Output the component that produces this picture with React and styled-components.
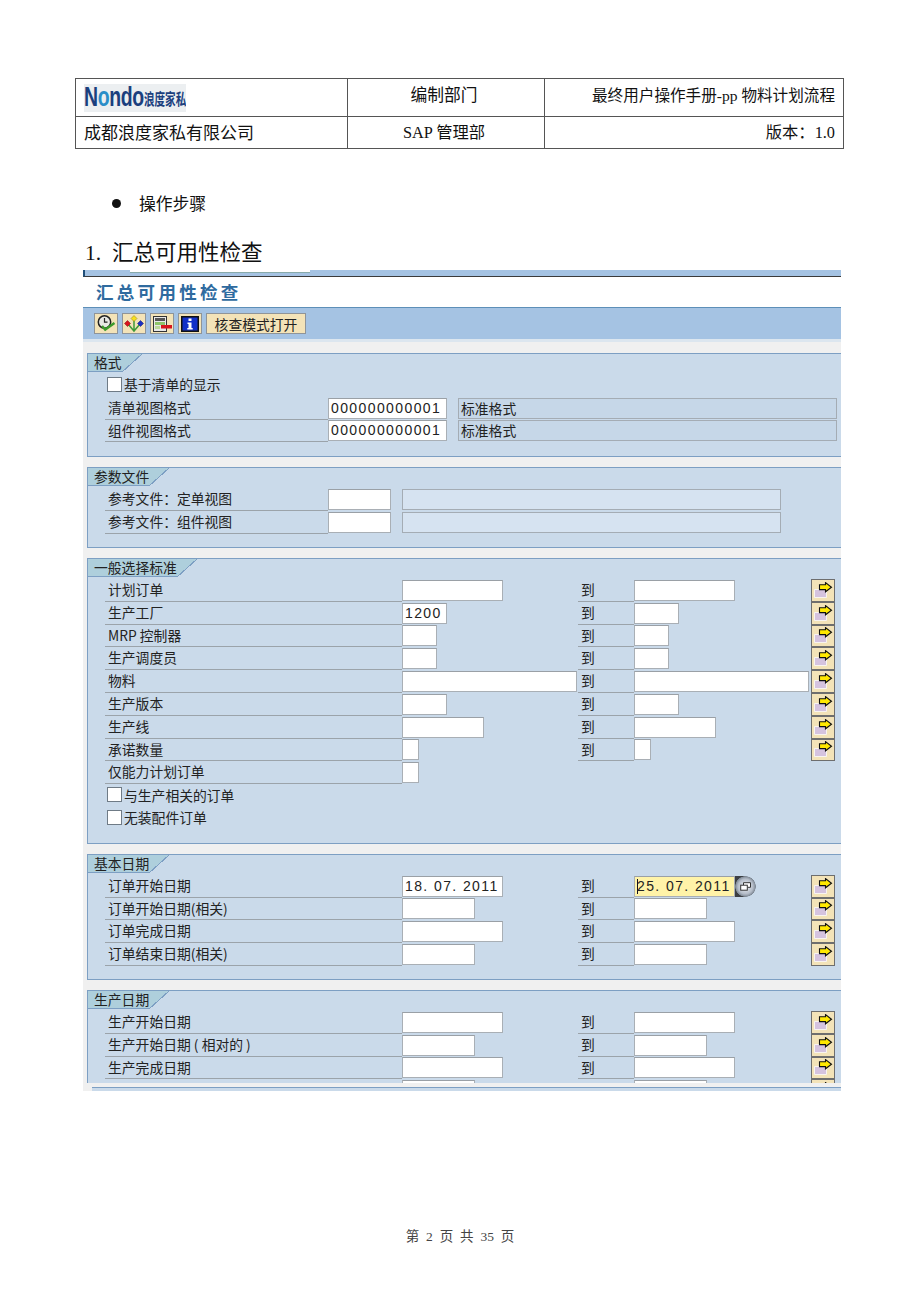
import React from 'react'
import styled, { createGlobalStyle } from 'styled-components'

const CJK = '"Noto Sans CJK SC", sans-serif'
const DOC = '"Liberation Serif", "Noto Sans CJK SC", serif'

const GlobalStyle = createGlobalStyle`
  html, body { margin: 0; padding: 0; background: #fff; }
  body { font-family: ${CJK}; color: #111; }
`

const ClockIcon = () => (
  <svg width="19" height="17" viewBox="0 0 19 17">
    <circle cx="7.5" cy="7" r="6.2" fill="#e8e8e4" stroke="#222" strokeWidth="1.5" />
    <path d="M7.5 3v4.2h3" fill="none" stroke="#222" strokeWidth="1.2" />
    <path d="M5 11l3.2 3.6L17.5 8" fill="none" stroke="#3d9a2c" strokeWidth="2.4" />
  </svg>
)

const TreeIcon = () => (
  <svg width="20" height="18" viewBox="0 0 20 18">
    <path d="M10 5v11M4 9l6 7 6-7" fill="none" stroke="#3f9a3a" strokeWidth="1.5" />
    <path d="M10 .5l3 3-3 3-3-3z" fill="#f5df1e" stroke="#8a7a10" strokeWidth=".5" />
    <path d="M3.5 5.5l3 3-3 3-3-3z" fill="#d8141c" stroke="#7a1010" strokeWidth=".5" />
    <path d="M16.5 5.5l3 3-3 3-3-3z" fill="#1a2fc0" stroke="#101a70" strokeWidth=".5" />
  </svg>
)

const FormIcon = () => (
  <svg width="19" height="16" viewBox="0 0 19 16">
    <rect x=".5" y=".5" width="13" height="15" fill="#e8e8e8" stroke="#333" />
    <rect x="2" y="2" width="10" height="3" fill="#555" />
    <rect x="2" y="6" width="10" height="3" fill="#8fc46a" />
    <rect x="2" y="10" width="5" height="3" fill="#bcd89a" />
    <rect x="8" y="9" width="11" height="3.5" fill="#d8141c" />
  </svg>
)

const InfoIcon = () => (
  <svg width="18" height="16" viewBox="0 0 18 16">
    <rect x=".75" y=".75" width="16.5" height="14.5" fill="#1230c8" stroke="#111" strokeWidth="1.5" />
    <rect x="7.5" y="2.5" width="3" height="2.5" fill="#fff" />
    <path d="M6.5 6.5h4v5.5h1.2v1.6H6.3V12h1.2V8H6.5z" fill="#fff" />
  </svg>
)

const ArrowIcon = () => (
  <svg width="20" height="17" viewBox="0 0 20 17">
    <path d="M1.5 7.5h12v8h-12z" fill="#d5c3df" stroke="#f8f4f0" />
    <path d="M6.5 2.8h6V.6l6 4.6-6 4.6V7.6h-6z" fill="#ffe800" stroke="#111" strokeWidth="1.1" />
  </svg>
)

const WindowsIcon = () => (
  <svg width="11" height="9" viewBox="0 0 11 9">
    <path d="M3.5 3V.7h7v4.6H7.5" fill="#fff" stroke="#333" />
    <rect x=".7" y="3.2" width="6.6" height="5" fill="#fff" stroke="#333" />
  </svg>
)

const Page = styled.div`
  width: 920px;
  height: 1301px;
  overflow: hidden;
  box-sizing: border-box;
  padding-top: 78px;
  position: relative;
`

const HeadTable = styled.div`
  width: 769px;
  margin-left: 75px;
  box-sizing: border-box;
  display: grid;
  grid-template-columns: 271px 197px 1fr;
  grid-template-rows: 37px 32px;
  border: 1px solid #555;
  font-family: ${DOC};
`

const HeadCell = styled.div`
  display: flex;
  align-items: center;
  justify-content: ${p => p.$align || 'center'};
  box-sizing: border-box;
  padding: 0 8px ${p => p.$lift || 0}px ${p => p.$left ?? 8}px;
  border-left: ${p => (p.$first ? 'none' : '1px solid #555')};
  border-top: ${p => (p.$lower ? '1px solid #555' : 'none')};
  font-size: ${p => p.$size || 16.3}px;
  white-space: nowrap;
`

const Logo = styled.div`
  width: 102px;
  height: 28px;
  background: #eceff1;
  display: flex;
  align-items: center;
  overflow: hidden;
  font-family: "Liberation Sans", ${CJK};
  color: #1b3f7e;
  font-weight: 700;
`

const LogoWord = styled.span`
  font-size: 27px;
  letter-spacing: -0.5px;
  transform: scaleX(0.72);
  transform-origin: left center;
  width: 60px;
  flex: none;
`

const LogoDot = styled.span`
  color: #2a8ec8;
`

const LogoCn = styled.span`
  font-size: 16px;
  transform: scaleX(0.66);
  transform-origin: left center;
  flex: none;
  white-space: nowrap;
`

const BulletRow = styled.div`
  margin: 43px 0 0 112px;
  height: 22px;
  display: flex;
  align-items: center;
  font-size: 16.8px;
`

const Bullet = styled.span`
  width: 9px;
  height: 9px;
  border-radius: 50%;
  background: #111;
  margin-right: 18px;
`

const Heading = styled.h1`
  margin: 24px 0 0 85px;
  height: 30px;
  line-height: 30px;
  font-size: 21.5px;
  font-weight: 400;
  font-family: "Liberation Serif", ${CJK};
  display: flex;
`

const HeadNum = styled.span`
  width: 27px;
`

const Shot = styled.div`
  margin: 2px 0 0 83px;
  width: 758px;
  height: 821px;
  display: flex;
  flex-direction: column;
  overflow: hidden;
  background: #f0f0f0;
`

const TopStrip = styled.div`
  height: 7px;
  flex: none;
  background: #a5c3e3;
  border-left: 2px solid #1f4f7a;
  border-bottom: 1px solid #3b3b3b;
  box-sizing: border-box;
  padding-left: 45px;
`

const TopTab = styled.div`
  width: 180px;
  height: 2px;
  background: #fff;
  border-bottom: 1px solid #8aa;
`

const TitleBar = styled.div`
  height: 30px;
  flex: none;
  background: #fff;
  border-bottom: 1px solid #5d8fb8;
  padding-left: 13px;
  font-size: 17.5px;
  font-weight: 700;
  letter-spacing: 3.3px;
  color: #2f6b9f;
  line-height: 30px;
`

const Toolbar = styled.div`
  height: 34px;
  flex: none;
  box-sizing: border-box;
  background: #a5c3e3;
  border-bottom: 3px solid #dce6ef;
  display: flex;
  align-items: center;
  gap: 4px;
  padding: 0 0 0 11px;
`

const ToolButton = styled.button`
  height: 21px;
  width: ${p => p.$w || 24}px;
  padding: 0;
  box-sizing: border-box;
  display: flex;
  align-items: center;
  justify-content: center;
  background: #f3e3b8;
  border: 1px solid #7f7f78;
  outline: 1px solid #8f9498;
  outline-offset: -1px;
  font-family: ${CJK};
  font-size: 13.8px;
  color: #222;
`

const Groups = styled.div`
  flex: 1;
  min-height: 0;
  overflow: hidden;
  padding: 11px 0 0 4px;
  display: flex;
  flex-direction: column;
  gap: 10px;
`

const Group = styled.section`
  flex: none;
  background: #cadaea;
  border: 1px solid #7d9fc3;
  border-right: none;
  padding-bottom: ${p => p.$pb || 13}px;
`

const TabWrap = styled.div`
  display: flex;
  height: 18px;
  margin-bottom: 2px;
`

const TabText = styled.div`
  background: #aecfdc;
  border-bottom: 1px solid #7d9fc3;
  padding: 0 0 0 6px;
  font-size: 13.8px;
  line-height: 16px;
  color: #222;
  box-sizing: border-box;
`

const TabCorner = styled.div`
  width: 20px;
  background: linear-gradient(to bottom right, #aecfdc 0 calc(50% - 0.5px), #7d9fc3 calc(50% - 0.5px) calc(50% + 0.5px), transparent calc(50% + 0.5px));
`

const Rows = styled.div`
  padding-left: 17px;
`

const CriteriaRow = styled.div`
  height: 22.8px;
  display: grid;
  grid-template-columns: 297px 176px 56px 177px 24px;
  align-items: center;
`

const FormatRow = styled.div`
  height: 22.8px;
  display: grid;
  grid-template-columns: 223px ${p => p.$slot}px ${p => p.$desc}px;
  align-items: center;
`

const Label = styled.div`
  height: 100%;
  box-sizing: border-box;
  border-bottom: 1px solid #9ba3aa;
  padding-left: 3px;
  font-size: 13.8px;
  line-height: 21px;
  color: #222;
  white-space: nowrap;
`

const CheckRow = styled.label`
  height: 22.8px;
  box-sizing: border-box;
  padding: 0 0 2px 2px;
  display: flex;
  align-items: center;
  font-size: 13.8px;
  color: #222;
`

const Box = styled.span`
  width: 13px;
  height: 13px;
  background: #fff;
  border: 1px solid #6f7b86;
  margin-right: 2px;
`

const Field = styled.div`
  width: ${p => p.$w}px;
  height: 21px;
  box-sizing: border-box;
  background: ${p => (p.$focus ? '#fff3a8' : '#fff')};
  border: 1px solid #a9afb5;
  border-top-color: #9aa0a6;
  padding-left: 2px;
  font-family: "Liberation Sans", sans-serif;
  font-size: 14px;
  letter-spacing: 1.4px;
  line-height: 19px;
  color: #222;
  overflow: hidden;
  white-space: nowrap;
`

const Caret = styled.span`
  display: inline-block;
  width: 1px;
  height: 15px;
  margin-right: -1px;
  vertical-align: -3px;
  background: #112;
`

const Desc = styled.div`
  height: 21px;
  box-sizing: border-box;
  background: ${p => (p.$light ? '#d6e3f1' : '#c6d7e8')};
  border: 1px solid #a4acb4;
  padding-left: 2px;
  font-size: 13.8px;
  line-height: 19px;
  color: #222;
`

const ToSlot = styled.div`
  display: flex;
  align-items: center;
`

const CalendarButton = styled.div`
  width: 21px;
  height: 21px;
  flex: none;
  display: flex;
  align-items: center;
  justify-content: center;
  background:
    radial-gradient(circle at center, #f2f5f8 0, #b4bcc8 7.5px, #808a96 10px, transparent 10.5px),
    linear-gradient(90deg, #3c3f44 50%, transparent 50%);
`

const ArrowButton = styled.div`
  height: 100%;
  box-sizing: border-box;
  background: #f3e3b8;
  border: 1px solid #6e6e6e;
  display: flex;
  align-items: center;
  justify-content: center;
`

const BottomBar = styled.div`
  height: 8px;
  flex: none;
  box-sizing: border-box;
  padding: 4px 0 0 9px;
  background: #f0f0f0;
`

const BottomInner = styled.div`
  height: 4px;
  background: #cadaea;
  border-top: 1px solid #7d9fc3;
`

const PageNo = styled.div`
  position: absolute;
  left: 0;
  right: 0;
  top: 1225px;
  text-align: center;
  font-family: "Liberation Serif", ${CJK};
  font-size: 13.5px;
  color: #444;
  word-spacing: 3.5px;
`

const formatRows = [
  { label: '清单视图格式', value: '000000000001' },
  { label: '组件视图格式', value: '000000000001' },
]

const general = [
  ['计划订单', 101, 101],
  ['生产工厂', 45, 45, '1200'],
  ['MRP 控制器', 35, 35],
  ['生产调度员', 35, 35],
  ['物料', 175, 175],
  ['生产版本', 45, 45],
  ['生产线', 82, 82],
  ['承诺数量', 17, 17],
]

const basicDates = [
  ['订单开始日期', 101, 101, '18. 07. 2011', '25. 07. 2011'],
  ['订单开始日期(相关)', 73, 73],
  ['订单完成日期', 101, 101],
  ['订单结束日期(相关)', 73, 73],
]

const prodDates = [
  ['生产开始日期', 101, 101],
  ['生产开始日期 ( 相对的 )', 73, 73],
  ['生产完成日期', 101, 101],
  ['', 73, 73],
]

const Criteria = ({ row }) => {
  const [label, from, to, value, toValue] = row
  return (
    <CriteriaRow>
      <Label>{label}</Label>
      <Field $w={from}>{value}</Field>
      <Label>{label && '到'}</Label>
      <ToSlot>
        <Field $w={to} $focus={!!toValue}>
          {toValue && <Caret />}
          {toValue}
        </Field>
        {toValue && <CalendarButton><WindowsIcon /></CalendarButton>}
      </ToSlot>
      <ArrowButton><ArrowIcon /></ArrowButton>
    </CriteriaRow>
  )
}

const GroupTitle = ({ children }) => (
  <TabWrap>
    <TabText>{children}</TabText>
    <TabCorner />
  </TabWrap>
)

export default function App() {
  return (
    <Page>
      <GlobalStyle />
      <HeadTable>
        <HeadCell $first $align="flex-start">
          <Logo>
            <LogoWord>N<LogoDot>o</LogoDot>ndo</LogoWord>
            <LogoCn>浪度家私</LogoCn>
          </Logo>
        </HeadCell>
        <HeadCell $lift={7} $left={4} $size={16.8}>编制部门</HeadCell>
        <HeadCell $lift={7} $align="flex-end" $size={15.6}>最终用户操作手册-pp 物料计划流程</HeadCell>
        <HeadCell $first $lower $lift={3} $align="flex-start" $size={17}>成都浪度家私有限公司</HeadCell>
        <HeadCell $lower $lift={3} $left={4}>SAP 管理部</HeadCell>
        <HeadCell $lower $lift={3} $align="flex-end">版本：1.0</HeadCell>
      </HeadTable>

      <BulletRow><Bullet />操作步骤</BulletRow>
      <Heading><HeadNum>1.</HeadNum>汇总可用性检查</Heading>

      <Shot>
        <TopStrip><TopTab /></TopStrip>
        <TitleBar>汇总可用性检查</TitleBar>
        <Toolbar>
          <ToolButton><ClockIcon /></ToolButton>
          <ToolButton><TreeIcon /></ToolButton>
          <ToolButton><FormIcon /></ToolButton>
          <ToolButton><InfoIcon /></ToolButton>
          <ToolButton $w={100}>核查模式打开</ToolButton>
        </Toolbar>

        <Groups>
          <Group $pb={14}>
            <GroupTitle>格式</GroupTitle>
            <Rows>
              <CheckRow><Box />基于清单的显示</CheckRow>
              {formatRows.map(r => (
                <FormatRow key={r.label} $slot={130} $desc={379}>
                  <Label>{r.label}</Label>
                  <Field $w={119}>{r.value}</Field>
                  <Desc>标准格式</Desc>
                </FormatRow>
              ))}
            </Rows>
          </Group>

          <Group>
            <GroupTitle>参数文件</GroupTitle>
            <Rows>
              <FormatRow $slot={74} $desc={379}>
                <Label>参考文件：定单视图</Label>
                <Field $w={63} />
                <Desc $light />
              </FormatRow>
              <FormatRow $slot={74} $desc={379}>
                <Label>参考文件：组件视图</Label>
                <Field $w={63} />
                <Desc $light />
              </FormatRow>
            </Rows>
          </Group>

          <Group>
            <GroupTitle>一般选择标准</GroupTitle>
            <Rows>
              {general.map(r => <Criteria key={r[0]} row={r} />)}
              <CriteriaRow>
                <Label>仅能力计划订单</Label>
                <Field $w={17} />
              </CriteriaRow>
              <CheckRow><Box />与生产相关的订单</CheckRow>
              <CheckRow><Box />无装配件订单</CheckRow>
            </Rows>
          </Group>

          <Group>
            <GroupTitle>基本日期</GroupTitle>
            <Rows>
              {basicDates.map(r => <Criteria key={r[0]} row={r} />)}
            </Rows>
          </Group>

          <Group>
            <GroupTitle>生产日期</GroupTitle>
            <Rows>
              {prodDates.map((r, i) => <Criteria key={i} row={r} />)}
            </Rows>
          </Group>
        </Groups>
        <BottomBar><BottomInner /></BottomBar>
      </Shot>

      <PageNo>第 2 页 共 35 页</PageNo>
    </Page>
  )
}
